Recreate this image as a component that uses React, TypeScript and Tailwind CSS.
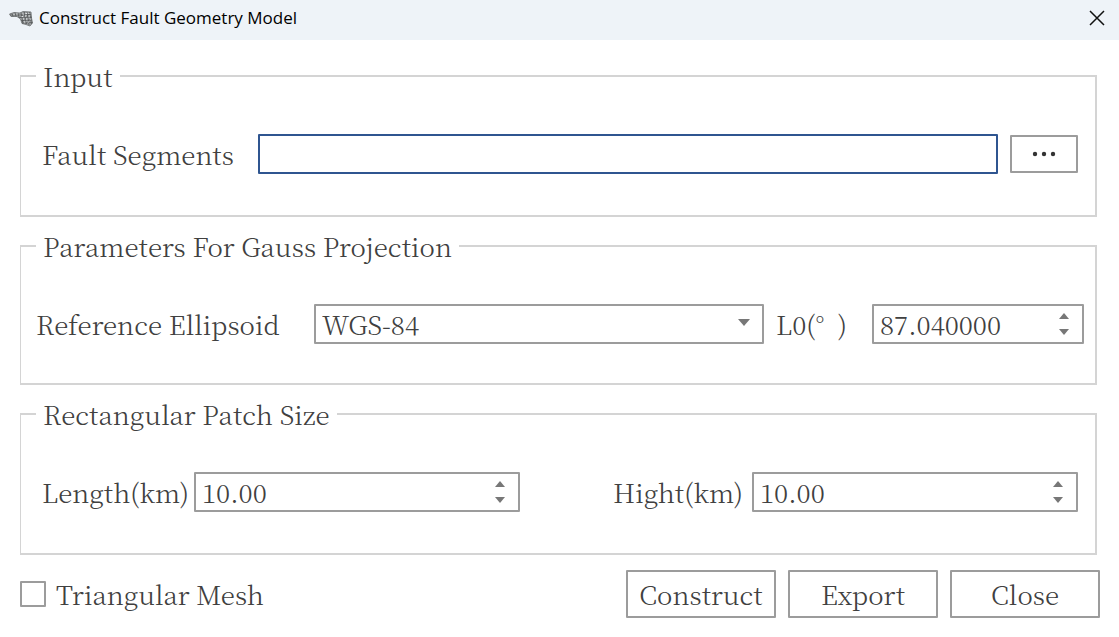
import { useState } from 'react';
import type { ReactNode } from 'react';

const box = 'border-2 border-[#9c9c9c] bg-white rounded-[1px]';

function MeshIcon() {
  return (
    <svg aria-hidden="true" className="h-6 w-6 shrink-0" viewBox="0 0 24 24" fill="none">
      <path
        d="M0.500 8L5 6.500L11 7L14 5.500L22 6L22.500 12L23.500 17L21 20L17 18.500L13 17.500L11.500 13L8 10.500L2 10.500Z"
        fill="#a3a6a8"
        stroke="#6a6d6f"
        strokeWidth="0.8"
      />
      <path
        d="M3 7.500L4 10.500M6 6.500L7 10.500M9 7L10 11.500M12 6.500L14 17.500M15 6L17 18M18 6L20 19M20.500 6L22.500 18M1 9L11 9L22 8.500M10 11.500L22.500 11M12 14.500L23 14M13 17L23.500 16.500M11 12L16 6M13 16L21 7M17 18L22.500 11"
        stroke="#505355"
        strokeWidth="0.7"
      />
      <path
        d="M13.500 8h1.500M16.500 7.500h1.500M19.500 7.500h1M12.500 10.500h1.500M16 10h1.500M19.500 10h1.500M14 13h1.500M17 13h1.500M20.500 13h1.500M15 16h1.500M18.500 16h1.500M4.500 8.500h1M7.500 8h1"
        stroke="#e3e6e8"
        strokeWidth="1"
      />
    </svg>
  );
}

function Group({ title, children }: { title: string; children: ReactNode }) {
  return (
    <fieldset className="min-w-0 border-2 border-l border-[#d4d4d4] pt-11 pb-[41px]">
      <legend className="ml-[15px] px-[7px] leading-7">{title}</legend>
      {children}
    </fieldset>
  );
}

function Spin({ id, initial, digits, className }: { id: string; initial: number; digits: number; className: string }) {
  const [value, setValue] = useState(initial.toFixed(digits));
  const step = (d: number) => setValue(((parseFloat(value) || 0) + d).toFixed(digits));
  return (
    <div className={`${box} flex h-10 min-w-0 items-stretch ${className}`}>
      <input
        id={id}
        type="text"
        inputMode="decimal"
        value={value}
        onChange={(e) => setValue(e.target.value)}
        className="w-full min-w-0 bg-transparent pl-1.5 outline-none"
      />
      <div className="flex w-9 shrink-0 flex-col items-center justify-center gap-2">
        <button type="button" aria-label="Increase" onClick={() => step(1)} className="flex h-2 items-center">
          <svg width="10" height="6" viewBox="0 0 10 6">
            <path d="M0 6L5 0L10 6Z" fill="#777" />
          </svg>
        </button>
        <button type="button" aria-label="Decrease" onClick={() => step(-1)} className="flex h-2 items-center">
          <svg width="10" height="6" viewBox="0 0 10 6">
            <path d="M0 0L5 6L10 0Z" fill="#777" />
          </svg>
        </button>
      </div>
    </div>
  );
}

export default function App() {
  return (
    <div className="min-h-screen bg-white font-['Noto_Serif_CJK_SC','Liberation_Serif',serif] text-[26px] leading-8 font-light text-[#404040]">
      <header className="flex h-10 items-center justify-between bg-[#eef3f8] pr-[13px] pb-1 pl-[9px] text-black">
        <div className="flex items-center gap-1.5">
          <MeshIcon />
          <h1 className="font-['Open_Sans',sans-serif] text-[17px] leading-6 font-normal">Construct Fault Geometry Model</h1>
        </div>
        <button type="button" aria-label="Close window" className="p-px">
          <svg width="16" height="16" viewBox="0 0 16 16" stroke="#111" strokeWidth="1.5">
            <path d="M1 1L15 15M15 1L1 15" />
          </svg>
        </button>
      </header>

      <main>
        <div className="flex flex-col gap-[15px] pt-[22px] pr-[22px] pl-5">
          <Group title="Input">
            <div className="flex items-center pr-[17px] pl-[21px]">
              <label htmlFor="segments" className="w-[216px] shrink-0 whitespace-nowrap">
                Fault Segments
              </label>
              <input
                id="segments"
                type="text"
                className="h-10 min-w-0 flex-1 rounded-[1px] border-2 border-[#2f5590] bg-white px-1.5 outline-none"
              />
              <button
                type="button"
                aria-label="Browse"
                className={`${box} ml-3 flex h-[38px] w-[68px] shrink-0 items-center justify-center`}
              >
                <svg width="24" height="6" viewBox="0 0 24 6" fill="#333">
                  <circle cx="3" cy="3" r="2.200" />
                  <circle cx="12" cy="3" r="2.200" />
                  <circle cx="21" cy="3" r="2.200" />
                </svg>
              </button>
            </div>
          </Group>

          <Group title="Parameters For Gauss Projection">
            <div className="-mb-0.5 flex items-center pr-[11px] pl-[15px]">
              <label htmlFor="ellipsoid" className="w-[278px] shrink-0 whitespace-nowrap">
                Reference Ellipsoid
              </label>
              <div className="grid min-w-0 flex-1">
                <select
                  id="ellipsoid"
                  className={`${box} col-start-1 row-start-1 h-10 w-full appearance-none pl-1.5 outline-none`}
                >
                  <option>WGS-84</option>
                </select>
                <svg
                  width="12"
                  height="7"
                  viewBox="0 0 12 7"
                  className="pointer-events-none col-start-1 row-start-1 mr-3.5 mb-1 self-center justify-self-end"
                >
                  <path d="M0 0L12 0L6 7Z" fill="#777" />
                </svg>
              </div>
              <label htmlFor="meridian" className="ml-3 w-24 shrink-0 whitespace-pre">
                L0(°&nbsp; )
              </label>
              <Spin id="meridian" initial={87.04} digits={6} className="w-[212px] shrink-0" />
            </div>
          </Group>

          <Group title="Rectangular Patch Size">
            <div className="grid grid-cols-[152px_1fr_232px_1fr] items-center pr-[17px] pl-[21px]">
              <label htmlFor="length" className="whitespace-nowrap">
                Length(km)
              </label>
              <Spin id="length" initial={10} digits={2} className="" />
              <label htmlFor="height" className="pl-[93px] whitespace-nowrap">
                Hight(km)
              </label>
              <Spin id="height" initial={10} digits={2} className="" />
            </div>
          </Group>
        </div>

        <footer className="flex items-center justify-between pt-[15px] pr-[19px] pb-[19px] pl-5">
          <label className="flex items-center gap-2.5">
            <input
              type="checkbox"
              className="h-[26px] w-[26px] appearance-none rounded-[1px] border-2 border-[#9c9c9c] bg-white checked:bg-[#2f5590]"
            />
            Triangular Mesh
          </label>
          <div className="flex gap-3">
            <button type="button" className={`${box} h-12 w-[150px]`}>
              Construct
            </button>
            <button type="button" className={`${box} h-12 w-[150px]`}>
              Export
            </button>
            <button type="button" className={`${box} h-12 w-[150px]`}>
              Close
            </button>
          </div>
        </footer>
      </main>
    </div>
  );
}
